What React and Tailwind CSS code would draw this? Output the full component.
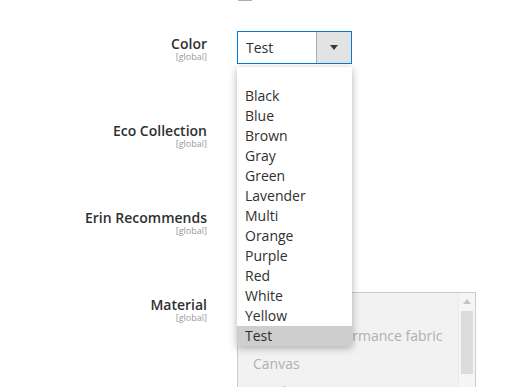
import React from 'react';

const colors = ['Black', 'Blue', 'Brown', 'Gray', 'Green', 'Lavender', 'Multi', 'Orange', 'Purple', 'Red', 'White', 'Yellow', 'Test'];
const materials = ['Burlap', 'Cocona® performance fabric', 'Canvas', 'Wool', 'Cotton'];

function FieldLabel({ children }) {
  return (
    <div className="w-[207px] shrink-0 pt-[5px] text-right">
      <div className="text-[14px] leading-[16px] font-semibold text-[#303030]">{children}</div>
      <div className="text-[9px] leading-[10px] text-[#999999]">[global]</div>
    </div>
  );
}

export default function App() {
  return (
    <div className="relative h-[387px] w-[521px] overflow-hidden bg-white font-['Open_Sans',sans-serif]">
      {/* checkbox of the field above, scrolled mostly out of view */}
      <div className="h-[2px] overflow-hidden">
        <div className="ml-[237px] -mt-[15px] h-[16px] w-[16px] rounded-[2px] border border-[#adadad] bg-white" />
      </div>

      <div className="mt-[29px] flex flex-col">
        {/* Color, with its option list open */}
        <div className="flex h-[87px]">
          <FieldLabel>Color</FieldLabel>
          <div className="relative ml-[30px] w-[115px]">
            <div className="flex h-[33px] w-[115px] border border-[#007bdb] bg-white">
              <div className="flex-1 pl-[8px] text-[14px] leading-[31px] text-[#303030]">Test</div>
              <div className="flex w-[35px] items-center justify-center border-l border-[#adadad] bg-[#e3e3e3]">
                <svg width="8" height="5" viewBox="0 0 8 5">
                  <path d="M0 0h8L4 5z" fill="#41362f" />
                </svg>
              </div>
            </div>
            <div className="absolute left-0 top-[36px] z-10 w-[115px] bg-white shadow-[0_2px_8px_rgba(0,0,0,0.3)]">
              <div className="h-[19px]" />
              {colors.map(c => (
                <div
                  key={c}
                  className={`h-[20px] pl-[8px] text-[14px] leading-[20px] text-[#303030] ${c === 'Test' ? 'bg-[#cecece]' : ''}`}
                >
                  {c}
                </div>
              ))}
            </div>
          </div>
        </div>

        {/* Eco Collection (control hidden under the open list) */}
        <div className="flex h-[87px]">
          <FieldLabel>Eco Collection</FieldLabel>
        </div>

        {/* Erin Recommends */}
        <div className="flex h-[87px]">
          <FieldLabel>Erin Recommends</FieldLabel>
        </div>

        {/* Material multiselect, disabled */}
        <div className="flex h-[87px]">
          <FieldLabel>Material</FieldLabel>
          <div className="ml-[30px] flex h-[140px] w-[239px] shrink-0 border border-[#cccccc] bg-[#f2f2f2]">
            <div className="flex-1 overflow-hidden pt-[1px]">
              {materials.map(m => (
                <div key={m} className="h-[28px] whitespace-nowrap pl-[15px] text-[14px] leading-[28px] text-[#b0b0b0]">
                  {m}
                </div>
              ))}
            </div>
            <div className="flex w-[17px] flex-col items-center border-l border-[#ebebeb] bg-[#f5f5f5] pt-[6px]">
              <svg width="8" height="5" viewBox="0 0 8 5">
                <path d="M4 0l4 5H0z" fill="#c4c4c4" />
              </svg>
              <div className="mt-[7px] h-[63px] w-[12px] bg-[#dcdcdc]" />
            </div>
          </div>
        </div>
      </div>
    </div>
  );
}
